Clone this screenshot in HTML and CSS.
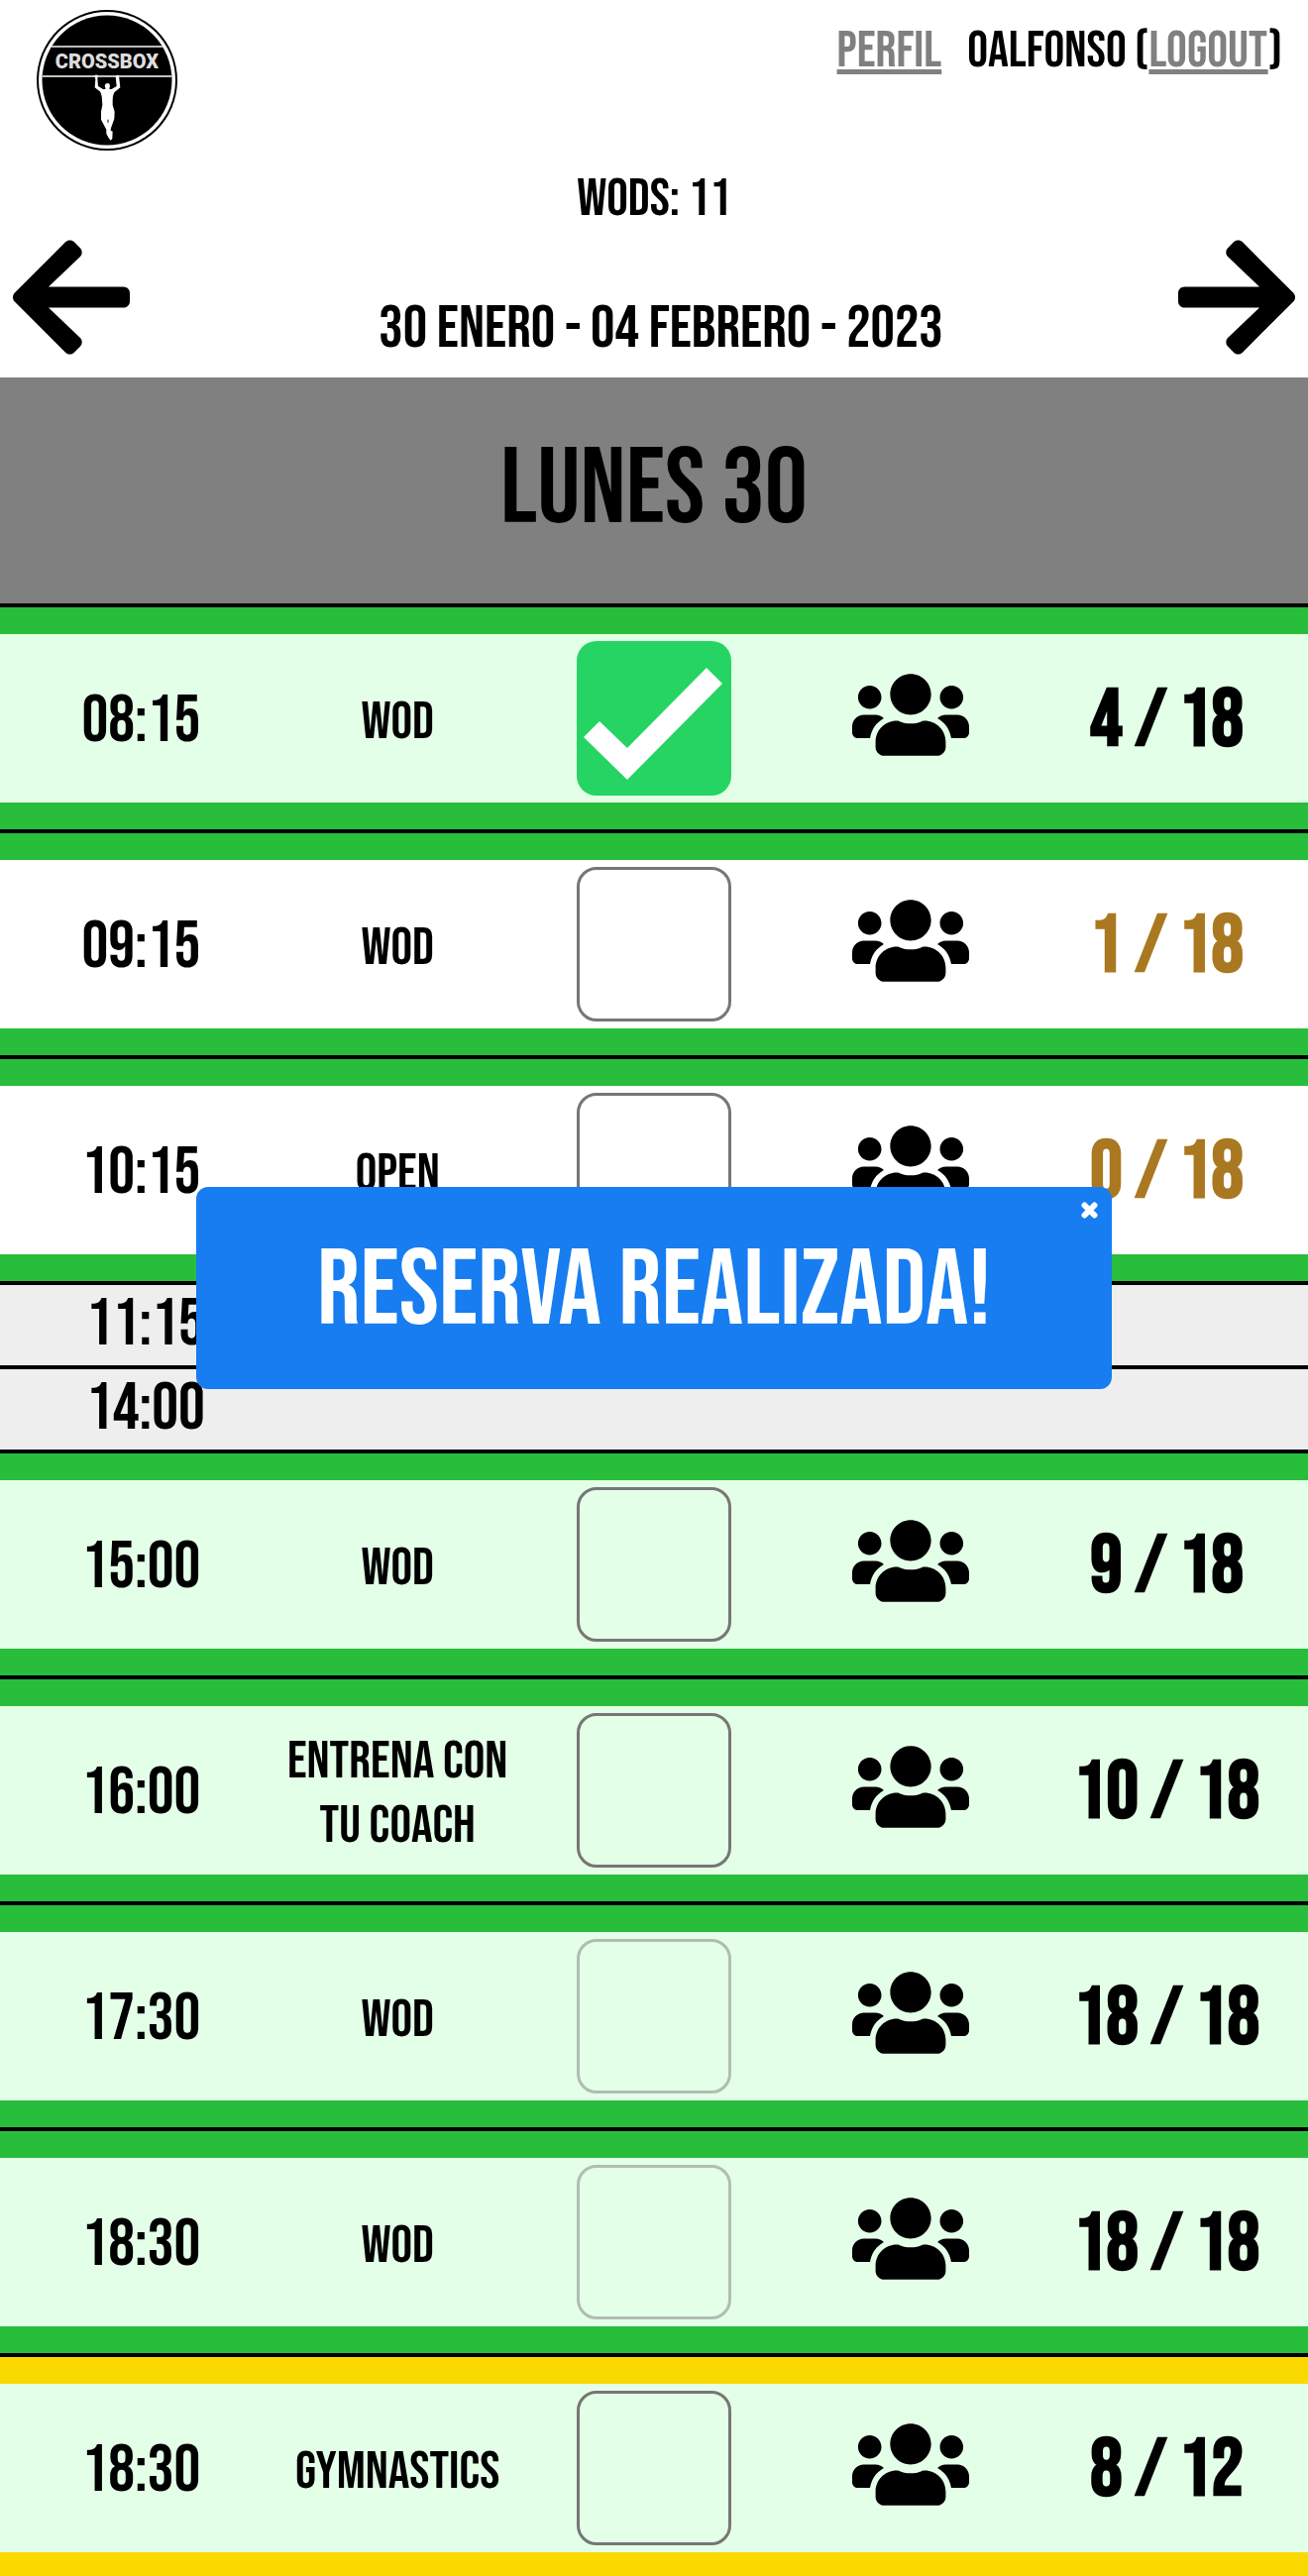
FILE: index.html
```html
<!DOCTYPE html>
<html lang="es">
<head>
<meta charset="utf-8">
<meta name="viewport" content="width=device-width, initial-scale=1">
<title>Crossbox - Reservas</title>
<link rel="stylesheet" href="styles.css">
</head>
<body>
<svg class="sprite" aria-hidden="true">
  <symbol id="users" viewBox="0 0 640 512"><path d="M96 224c35.300 0 64-28.700 64-64s-28.700-64-64-64-64 28.700-64 64 28.700 64 64 64zm448 0c35.300 0 64-28.700 64-64s-28.700-64-64-64-64 28.700-64 64 28.700 64 64 64zm32 32h-64c-17.600 0-33.500 7.100-45.100 18.600 40.300 22.100 68.900 62 75.100 109.400h66c17.700 0 32-14.300 32-32v-32c0-35.300-28.700-64-64-64zm-256 0c61.900 0 112-50.100 112-112S381.900 32 320 32 208 82.100 208 144s50.100 112 112 112zm76.800 32h-8.300c-20.800 10-43.900 16-68.500 16s-47.600-6-68.500-16h-8.300C179.600 288 128 339.600 128 403.200V432c0 26.500 21.500 48 48 48h288c26.500 0 48-21.500 48-48v-28.800c0-63.600-51.600-115.200-115.200-115.200zm-223.700-13.400C161.500 263.100 145.600 256 128 256H64c-35.300 0-64 28.700-64 64v32c0 17.700 14.300 32 32 32h65.900c6.300-47.400 34.900-87.300 75.200-109.400z"/></symbol>
</svg>

<header>
  <div class="topbar">
    <svg class="logo" viewBox="0 0 142 142" role="img" aria-label="Crossbox">
      <circle cx="71" cy="71" r="71"/>
      <circle cx="71" cy="71" r="69" fill="#fff"/>
      <circle cx="71" cy="71" r="65.500"/>
      <path d="M15 37h112" stroke="#bbb" stroke-width="2"/>
      <path d="M6 67h130" stroke="#fff" stroke-width="1.500"/>
      <text class="logo-name" x="71" y="59">CROSSBOX</text>
      <path transform="scale(.3333) translate(-51 -30)" fill="#fff" d="M226 229Q231 224 237 229L235 237 237 261 252 270 260 270 257 260Q258 252 265 252 273 252 273 260L271 270 278 270 293 261 290 231Q295 224 300 229L304 265 286 280Q281 290 281 303L281 318 287 338 286 360 276 388 275 395 281 398 280 420 275 425 269 418 262 405 262 392 246 362 246 338 250 318 249 303Q249 290 244 278L227 265 229 240ZM267 360Q263 367 267 374 272 367 267 360Z"/>
    </svg>
    <nav class="account">
      <a href="#perfil">PERFIL</a>
      <span>OALFONSO (<a href="#logout">LOGOUT</a>)</span>
    </nav>
  </div>
  <p class="wods">WODS: 11</p>
  <div class="week">
    <button class="arrow" type="button" aria-label="Semana anterior"><svg viewBox="0 0 448 512"><path d="M257.500 445.100l-22.200 22.200c-9.400 9.400-24.600 9.400-33.900 0L7 273c-9.400-9.400-9.400-24.600 0-33.900L201.400 44.700c9.400-9.400 24.600-9.400 33.900 0l22.200 22.200c9.500 9.500 9.300 25-.4 34.300L136.600 216H424c13.300 0 24 10.700 24 24v32c0 13.300-10.700 24-24 24H136.600l120.500 114.800c9.800 9.300 10 24.800.4 34.300z"/></svg></button>
    <h1 class="range">30 ENERO - 04 FEBRERO - 2023</h1>
    <button class="arrow" type="button" aria-label="Semana siguiente"><svg viewBox="0 0 448 512"><path d="M190.500 66.900l22.200-22.200c9.400-9.400 24.600-9.400 33.900 0L441 239c9.400 9.400 9.400 24.600 0 33.900L246.600 467.300c-9.400 9.400-24.600 9.400-33.900 0l-22.200-22.200c-9.500-9.500-9.300-25 .4-34.300L311.400 296H24c-13.300 0-24-10.700-24-24v-32c0-13.300 10.700-24 24-24h287.400L190.900 101.200c-9.800-9.300-10-24.800-.4-34.300z"/></svg></button>
  </div>
</header>

<main>
  <h2 class="day">LUNES 30</h2>
  <ul class="schedule">
    <li class="slot tinted">
      <time class="time">08:15</time><label class="name" for="c1">WOD</label>
      <input class="check" type="checkbox" id="c1" checked>
      <button class="people" type="button" aria-label="Asistentes"><svg><use href="#users"/></svg></button>
      <strong class="count">4 / 18</strong>
    </li>
    <li class="slot">
      <time class="time">09:15</time><label class="name" for="c2">WOD</label>
      <input class="check" type="checkbox" id="c2">
      <button class="people" type="button" aria-label="Asistentes"><svg><use href="#users"/></svg></button>
      <strong class="count low">1 / 18</strong>
    </li>
    <li class="slot">
      <time class="time">10:15</time><label class="name" for="c3">OPEN</label>
      <input class="check" type="checkbox" id="c3">
      <button class="people" type="button" aria-label="Asistentes"><svg><use href="#users"/></svg></button>
      <strong class="count low">0 / 18</strong>
    </li>
    <li class="closed"><time>11:15</time></li>
    <li class="closed"><time>14:00</time></li>
    <li class="slot tinted">
      <time class="time">15:00</time><label class="name" for="c4">WOD</label>
      <input class="check" type="checkbox" id="c4">
      <button class="people" type="button" aria-label="Asistentes"><svg><use href="#users"/></svg></button>
      <strong class="count">9 / 18</strong>
    </li>
    <li class="slot tinted">
      <time class="time">16:00</time><label class="name" for="c5">ENTRENA CON TU COACH</label>
      <input class="check" type="checkbox" id="c5">
      <button class="people" type="button" aria-label="Asistentes"><svg><use href="#users"/></svg></button>
      <strong class="count">10 / 18</strong>
    </li>
    <li class="slot tinted">
      <time class="time">17:30</time><label class="name" for="c6">WOD</label>
      <input class="check" type="checkbox" id="c6" disabled>
      <button class="people" type="button" aria-label="Asistentes"><svg><use href="#users"/></svg></button>
      <strong class="count">18 / 18</strong>
    </li>
    <li class="slot tinted">
      <time class="time">18:30</time><label class="name" for="c7">WOD</label>
      <input class="check" type="checkbox" id="c7" disabled>
      <button class="people" type="button" aria-label="Asistentes"><svg><use href="#users"/></svg></button>
      <strong class="count">18 / 18</strong>
    </li>
    <li class="slot tinted gym">
      <time class="time">18:30</time><label class="name" for="c8">GYMNASTICS</label>
      <input class="check" type="checkbox" id="c8">
      <button class="people" type="button" aria-label="Asistentes"><svg><use href="#users"/></svg></button>
      <strong class="count">8 / 12</strong>
    </li>
  </ul>
</main>

<div class="overlay">
  <div class="toast" role="status">
    RESERVA REALIZADA!
    <button class="close" type="button" aria-label="Cerrar"><svg viewBox="0 0 17 17"><path d="M3.500 3.500l10 10M13.500 3.500l-10 10"/></svg></button>
  </div>
</div>
</body>
</html>
```
FILE: styles.css
```css
* {
  box-sizing: border-box;
}

body {
  margin: 0;
  background: #fff;
  color: #000;
  font-family: "Bebas Neue", "Roboto Condensed", "Liberation Sans", sans-serif;
}

h1,
h2,
p,
ul {
  margin: 0;
  padding: 0;
  font-weight: 400;
  list-style: none;
}

button {
  padding: 0;
  border: 0;
  background: none;
  cursor: pointer;
}

svg {
  display: block;
}

.sprite {
  display: none;
}

/* Header */

.topbar {
  display: flex;
  justify-content: space-between;
  align-items: flex-start;
  padding: 10px 26px 18px 37px;
}

.logo {
  width: 142px;
  height: 142px;
}

.logo-name {
  font: 900 20px Roboto, sans-serif;
  text-anchor: middle;
  fill: #ddd;
}

.account {
  display: flex;
  gap: 26px;
  padding-top: 11px;
  font-size: 52px;
  line-height: 62px;
}

.account a {
  color: #808080;
}

.wods {
  font-size: 54px;
  line-height: 62px;
  text-align: center;
}

.week {
  display: flex;
  justify-content: space-between;
  align-items: flex-end;
  padding: 0 13px 13px;
}

.arrow svg {
  width: 118px;
  height: 136px;
}

.range {
  padding-left: 14px;
  font-size: 61px;
  line-height: 73px;
}

/* Day schedule */

.day {
  padding: 49px 0;
  background: #808080;
  font-size: 108px;
  line-height: 130px;
  text-align: center;
}

.slot,
.closed {
  border-top: 4px solid #000;
}

.slot {
  --band: #28be3c;
  display: grid;
  grid-template-columns: repeat(5, minmax(0, 1fr));
  align-items: center;
  justify-items: center;
  padding: 34px 13px;
  box-shadow: inset 0 27px var(--band), inset 0 -27px var(--band);
  text-align: center;
}

.tinted {
  background: #e4ffe8;
}

.gym {
  --band: #fad900;
}

.closed {
  padding-left: 87px;
  background: #eee;
  font-size: 67px;
  line-height: 81px;
}

.time,
.name {
  padding-top: 6px;
}

.time {
  font-size: 67px;
  line-height: 81px;
}

.name {
  font-size: 54px;
  line-height: 65px;
}

.count {
  padding-top: 4px;
  font-size: 81px;
  line-height: 97px;
  white-space: nowrap;
}

.low {
  color: #aa7820;
}

.people {
  padding-bottom: 8px;
}

.people svg {
  width: 118px;
  height: 95px;
}

.check {
  appearance: none;
  width: 156px;
  height: 156px;
  margin: 0;
  border: 3px solid #767676;
  border-radius: 20px;
}

.check:disabled {
  border-color: #b0bdb2;
}

.check:checked {
  border: 0;
  background: #25d463;
}

.check:checked::before {
  content: "";
  display: block;
  height: 100%;
  background: #fff;
  clip-path: polygon(7px 97px, 23px 81px, 51px 108px, 131px 27px, 147px 43px, 51px 140px);
}

/* Booking confirmation */

.overlay {
  position: fixed;
  inset: 0;
  display: grid;
  place-items: center;
}

.toast {
  position: relative;
  width: 70%;
  padding: 41px 0 33px;
  border-radius: 12px;
  background: #177df0;
  color: #fff;
  font-size: 108px;
  line-height: 130px;
  text-align: center;
}

.close {
  position: absolute;
  top: 15px;
  right: 14px;
  fill: none;
  stroke: #fff;
  stroke-width: 6px;
  stroke-linecap: round;
}

.close svg {
  width: 17px;
  height: 17px;
}
```
